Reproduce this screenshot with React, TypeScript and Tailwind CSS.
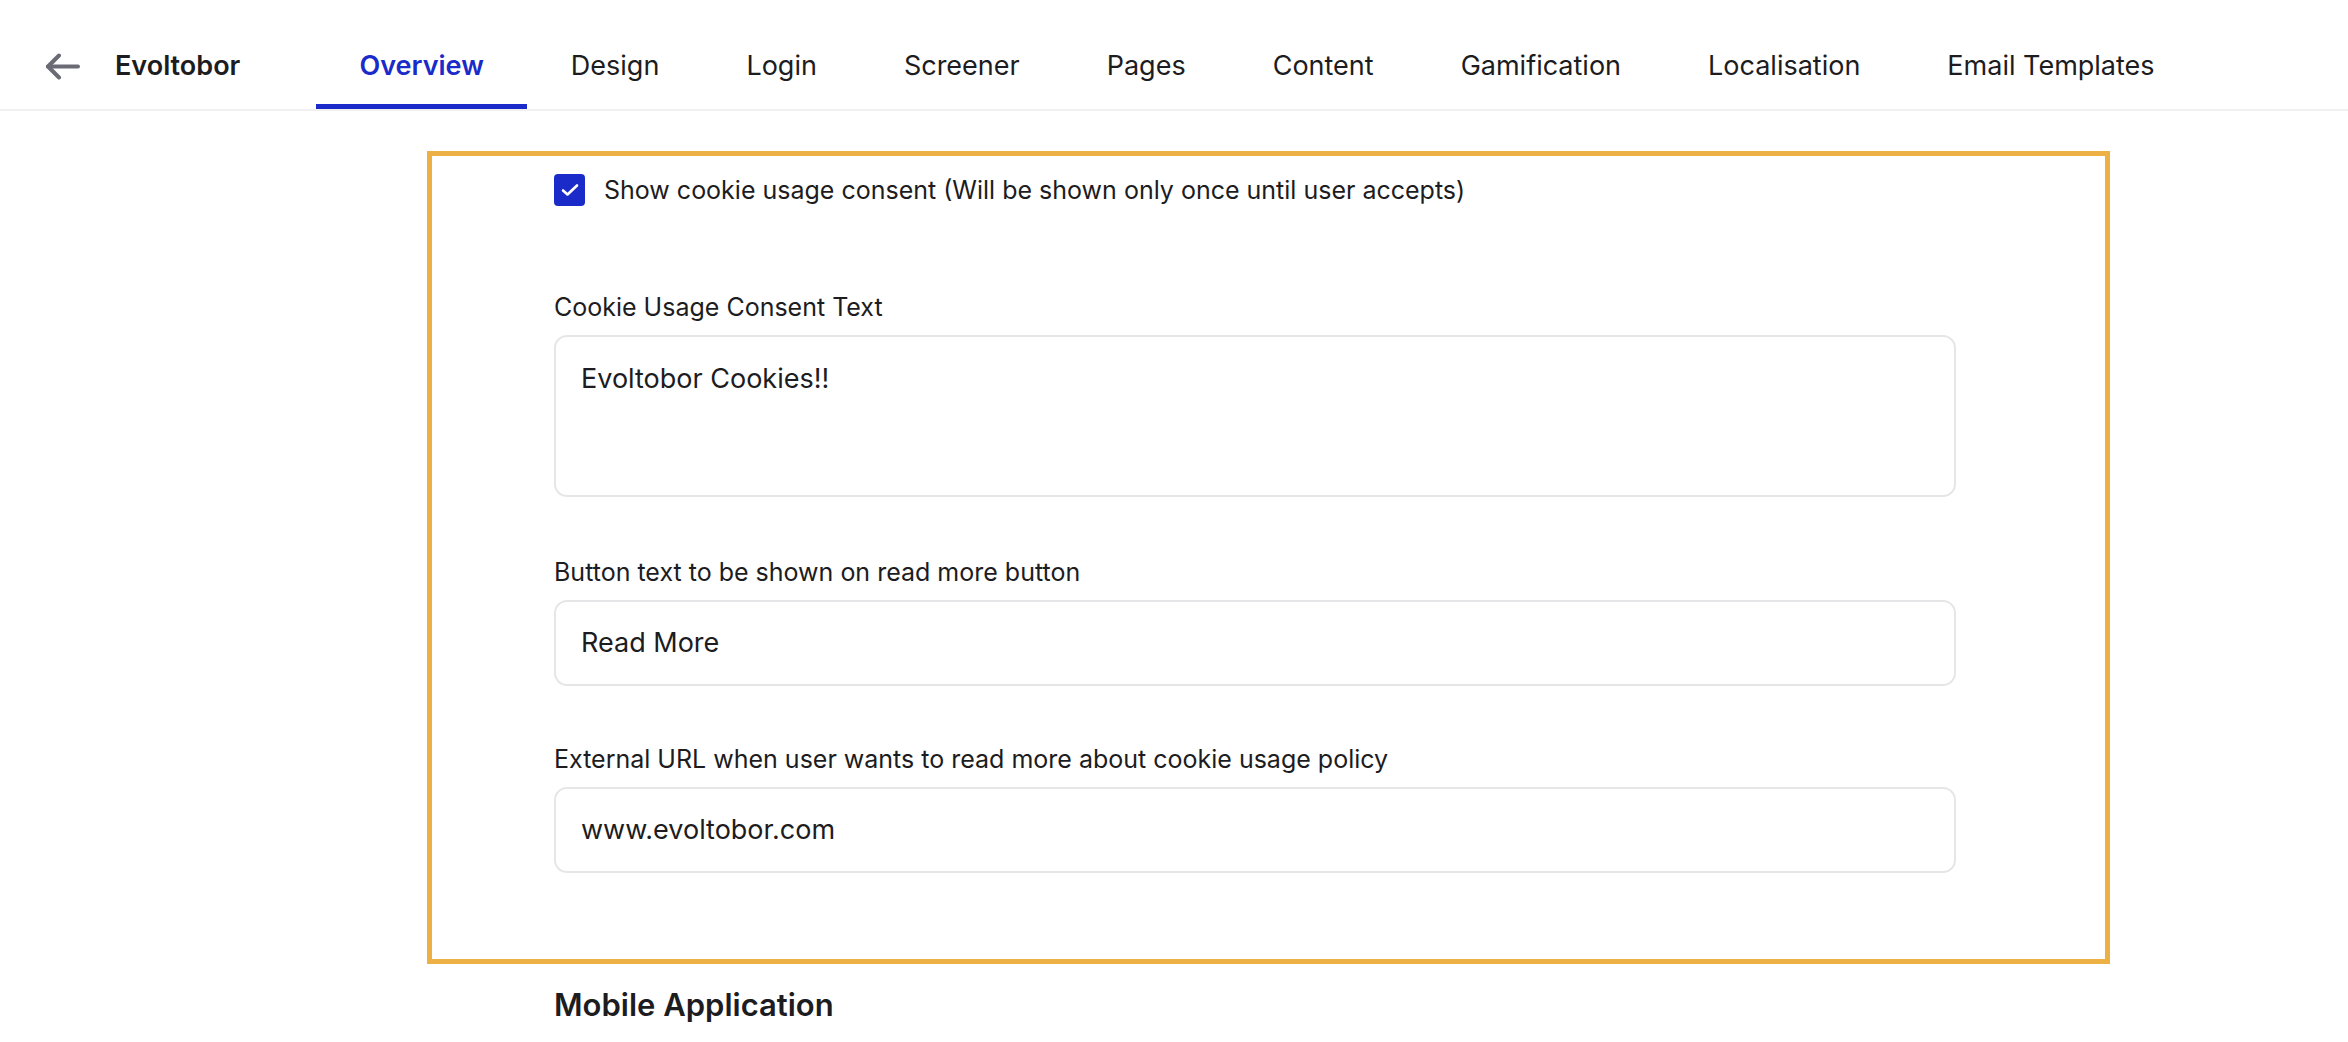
import { useState } from "react";

const tabs = [
  "Overview",
  "Design",
  "Login",
  "Screener",
  "Pages",
  "Content",
  "Gamification",
  "Localisation",
  "Email Templates",
];

function BackArrow() {
  return (
    <svg width="35" height="27" viewBox="0 0 35 27" fill="none" className="shrink-0">
      <path d="M33 13.5H3" stroke="#6b6b76" strokeWidth="4" strokeLinecap="round" />
      <path d="M14 2.5L3 13.5L14 24.5" stroke="#6b6b76" strokeWidth="4" strokeLinecap="round" strokeLinejoin="round" />
    </svg>
  );
}

function Header() {
  const active = "Overview";
  return (
    <header className="flex h-[111px] items-stretch border-b-2 border-[#f0f0f2] pl-[45px]">
      <div className="flex items-center pt-[24px]">
        <BackArrow />
        <span className="ml-[35px] w-[201px] text-[27px] font-semibold text-[#1c1c21]">Evoltobor</span>
      </div>
      <nav className="flex items-stretch">
        {tabs.map((t) => (
          <div
            key={t}
            className={
              t === active
                ? "flex items-center border-b-[5px] border-[#1b2bc9] px-[43.5px] pt-[28px] text-[27px] font-semibold text-[#1b2bc9]"
                : "flex items-center border-b-[5px] border-transparent px-[43.5px] pt-[28px] text-[27px] text-[#1c1c21]"
            }
          >
            {t}
          </div>
        ))}
      </nav>
    </header>
  );
}

function Field({ label, value, tall }: { label: string; value: string; tall?: boolean }) {
  return (
    <div>
      <div className="text-[25px] leading-[30px] text-[#1c1c21]">{label}</div>
      <div
        className={
          tall
            ? "mt-[13px] h-[162px] rounded-[13px] border-2 border-[#e6e6e8] bg-white px-[25px] pt-[24px] text-[27px] leading-[36px] text-[#1c1c21]"
            : "mt-[13px] flex h-[86px] items-center rounded-[13px] border-2 border-[#e6e6e8] bg-white px-[25px] text-[27px] text-[#1c1c21]"
        }
      >
        {value}
      </div>
    </div>
  );
}

export default function App() {
  const [checked, setChecked] = useState(true);

  return (
    <div className="min-h-[1042px] bg-white font-['Inter',sans-serif] antialiased">
      <Header />
      <main className="ml-[427px] pt-[40px]">
        <section className="w-[1683px] border-[5px] border-[#ecb045] pb-[86px] pl-[122px] pt-[18px]">
          <div className="w-[1402px]">
            <label className="flex items-center gap-[19px]">
              <button
                onClick={() => setChecked(!checked)}
                className="flex h-[32px] w-[31px] items-center justify-center rounded-[4px] bg-[#1b2bc9]"
              >
                {checked && (
                  <svg width="18" height="14" viewBox="0 0 18 14" fill="none">
                    <path d="M2 7.5L6.5 11.5L16 2.5" stroke="white" strokeWidth="2.6" strokeLinecap="round" strokeLinejoin="round" />
                  </svg>
                )}
              </button>
              <span className="text-[25px] leading-[32px] text-[#1c1c21]">
                Show cookie usage consent (Will be shown only once until user accepts)
              </span>
            </label>

            <div className="mt-[86px]">
              <Field label="Cookie Usage Consent Text" value="Evoltobor Cookies!!" tall />
            </div>
            <div className="mt-[60px]">
              <Field label="Button text to be shown on read more button" value="Read More" />
            </div>
            <div className="mt-[58px]">
              <Field label="External URL when user wants to read more about cookie usage policy" value="www.evoltobor.com" />
            </div>
          </div>
        </section>
        <h2 className="ml-[127px] mt-[23px] text-[31px] font-semibold leading-[36px] text-[#1c1c21]">Mobile Application</h2>
      </main>
    </div>
  );
}
